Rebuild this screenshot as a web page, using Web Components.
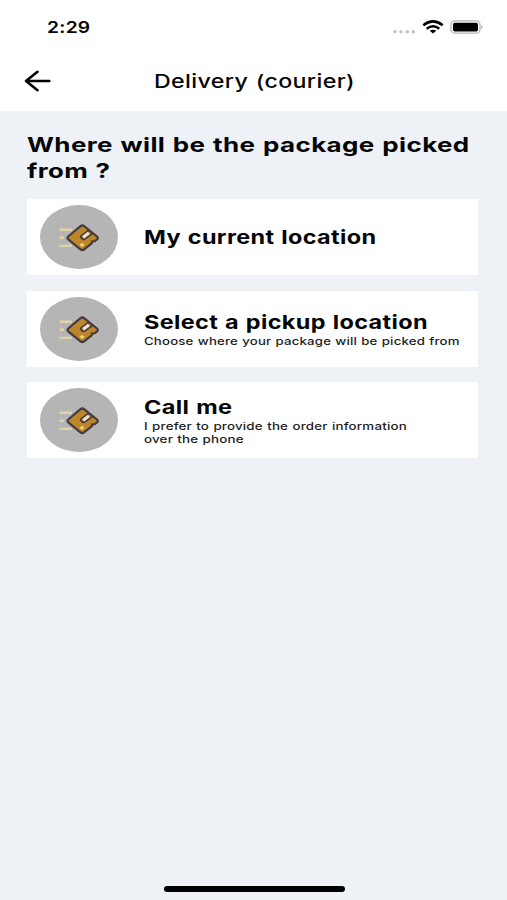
<!DOCTYPE html>
<html lang="en">
<head>
<meta charset="utf-8">
<title>Delivery (courier)</title>
<style>
  body {
    margin: 0;
    background: #eef2f7;
    color: #050505;
    font-family: Inter, "Open Sans", sans-serif;
  }
</style>
</head>
<body>
<delivery-page></delivery-page>

<script>
// one line of text, widened to the given width
class WideText extends HTMLElement {
  constructor() {
    super();
    this.attachShadow({ mode: 'open' });
    this.shadowRoot.innerHTML = `
      <style>
        :host { display: block; white-space: nowrap; }
        span { display: inline-block; transform-origin: 0 50%; letter-spacing: 0.015em; word-spacing: 0.04em; }
      </style>
      <span><slot></slot></span>
    `;
  }

  connectedCallback() {
    const width = Number(this.getAttribute('width'));
    const span = this.shadowRoot.querySelector('span');
    this.style.width = width + 'px';
    span.style.transform = `scaleX(${width / span.offsetWidth})`;
  }
}

class StatusBar extends HTMLElement {
  constructor() {
    super();
    this.attachShadow({ mode: 'open' });
    this.shadowRoot.innerHTML = `
      <style>
        :host {
          display: flex;
          justify-content: space-between;
          align-items: center;
          height: 54px;
          padding: 0 23px 0 47px;
          box-sizing: border-box;
          background: #fff;
        }
        .time { font-size: 16.5px; font-weight: 600; line-height: 20px; }
        svg { display: block; }
      </style>
      <wide-text class="time" width="43">2:29</wide-text>
      <svg width="92" height="20" viewBox="392 17 92 20">
        <g fill="#c4c4c4">
          <circle cx="395" cy="31.7" r="1.8"/>
          <circle cx="401" cy="31.7" r="1.8"/>
          <circle cx="407.3" cy="31.7" r="1.8"/>
          <circle cx="413.3" cy="31.7" r="1.8"/>
        </g>
        <g fill="none" stroke="#000" stroke-width="2.5">
          <path d="M423.3 25.2Q433 17.6 442.7 25.2"/>
          <path d="M426.7 28.7Q433 23.8 439.3 28.7"/>
        </g>
        <path d="M429.7 30.8Q433 28.5 436.3 30.8L433 33.4Z"/>
        <rect x="451" y="20.8" width="29" height="12.4" rx="3.8" fill="#fff" stroke="#b5b5b5" stroke-width="1.3"/>
        <rect x="453" y="22.7" width="25" height="8.8" rx="1.8"/>
        <path d="M481.4 25Q483.6 27 481.4 29Z" fill="#999"/>
      </svg>
    `;
  }
}

class NavBar extends HTMLElement {
  constructor() {
    super();
    this.attachShadow({ mode: 'open' });
    this.shadowRoot.innerHTML = `
      <style>
        :host {
          display: grid;
          grid-template-columns: 130px auto;
          align-items: center;
          height: 56.5px;
          padding: 0 24px 3px;
          box-sizing: border-box;
          background: #fff;
        }
        svg { display: block; }
        .title { font-size: 18.5px; font-weight: 500; line-height: 24px; }
      </style>
      <svg width="28" height="22" viewBox="0 0 28 22" fill="none" stroke="#000" stroke-width="2.5" stroke-linecap="round" stroke-linejoin="round">
        <path d="M13.5 1.7L2 11L13.5 20.3M2 11H25.3"/>
      </svg>
      <wide-text class="title" width="201"><slot></slot></wide-text>
    `;
  }
}

class PackageIcon extends HTMLElement {
  constructor() {
    super();
    this.attachShadow({ mode: 'open' });
    this.shadowRoot.innerHTML = `
      <style>
        :host {
          display: flex;
          width: 78px;
          height: 64px;
          border-radius: 50%;
          background: #b5b5b5;
        }
      </style>
      <svg width="78" height="64" viewBox="0 0 78 64">
        <g fill="none" stroke="#e2d2a6" stroke-width="2.4">
          <path d="M19.5 24.7H32M19.5 32.8H24M19.5 40.9H32"/>
        </g>
        <path d="M40.5 21.2Q42.3 19.8 44.1 21.2L57 31.5Q58.6 32.9 57 34.3L54.3 36.5L52 36.3L51.7 38.4L44.1 44.3Q42.3 45.7 40.5 44.3L28.2 34.3Q26.7 32.9 28.2 31.5Z" fill="#bc862b" stroke="#443b41" stroke-width="2.2" stroke-linejoin="round"/>
        <path d="M48.8 25.2L41.2 31Q40.2 32 41.2 32.9L42.6 34Q43.8 34.8 45 33.9L52.6 28.2" fill="none" stroke="#443b41" stroke-width="1.8"/>
        <path d="M43.2 32.3L48.8 28" stroke="#eee2cd" stroke-width="3.2"/>
        <path d="M42 37.7L44.6 39.8L42 41.9L39.4 39.8Z" fill="#f2ce70"/>
      </svg>
    `;
  }
}

class OptionCard extends HTMLElement {
  constructor() {
    super();
    this.attachShadow({ mode: 'open' });
    this.shadowRoot.innerHTML = `
      <style>
        :host {
          display: flex;
          align-items: center;
          gap: 26px;
          height: 76px;
          padding-left: 13px;
          box-sizing: border-box;
          border-radius: 1px;
          background: #fff;
        }
        .text { padding-top: 2px; }
        .title { font-size: 19px; font-weight: 700; line-height: 24px; }
        .info { font-size: 10.8px; font-weight: 500; line-height: 13px; color: #1c1c1c; }
      </style>
      <package-icon></package-icon>
      <div class="text">
        <div class="title"><slot></slot></div>
        <div class="info"><slot name="info"></slot></div>
      </div>
    `;
  }
}

class DeliveryPage extends HTMLElement {
  constructor() {
    super();
    this.attachShadow({ mode: 'open' });
    this.shadowRoot.innerHTML = `
      <style>
        :host {
          display: flex;
          flex-direction: column;
          height: 900px;
        }
        main {
          flex: 1;
          padding: 21.5px 29px 0 27px;
        }
        h1 {
          margin: 0 0 16px;
          font-size: 20.3px;
          font-weight: 700;
          line-height: 25.5px;
        }
        .options {
          display: flex;
          flex-direction: column;
          gap: 15.5px;
        }
        .home {
          width: 181px;
          height: 6px;
          margin: 0 auto 8px 164px;
          border-radius: 3px;
          background: #000;
        }
      </style>
      <status-bar></status-bar>
      <nav-bar>Delivery (courier)</nav-bar>
      <main>
        <h1>
          <wide-text width="443">Where will be the package picked</wide-text>
          <wide-text width="84">from ?</wide-text>
        </h1>
        <div class="options">
          <option-card>
            <wide-text width="232">My current location</wide-text>
          </option-card>
          <option-card>
            <wide-text width="284">Select a pickup location</wide-text>
            <wide-text slot="info" width="315">Choose where your package will be picked from</wide-text>
          </option-card>
          <option-card>
            <wide-text width="88">Call me</wide-text>
            <wide-text slot="info" width="263">I prefer to provide the order information</wide-text>
            <wide-text slot="info" width="100">over the phone</wide-text>
          </option-card>
        </div>
      </main>
      <div class="home"></div>
    `;
  }
}

// containers first, so the text is in its final font when it gets measured
customElements.define('delivery-page', DeliveryPage);
customElements.define('status-bar', StatusBar);
customElements.define('nav-bar', NavBar);
customElements.define('option-card', OptionCard);
customElements.define('package-icon', PackageIcon);
customElements.define('wide-text', WideText);
</script>
</body>
</html>
